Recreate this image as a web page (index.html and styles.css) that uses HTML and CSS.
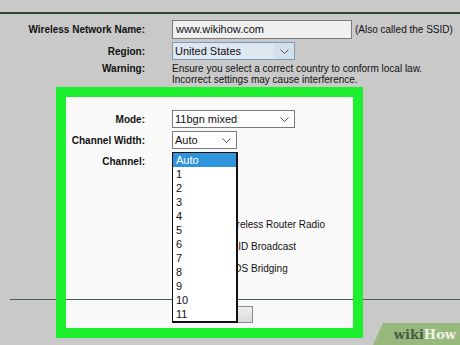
FILE: index.html
```html
<!DOCTYPE html>
<html>
<head>
<meta charset="utf-8">
<link rel="stylesheet" href="styles.css">
</head>
<body>
<div class="page">
  <hr class="topline">
  <div class="form-grid top-grid">
    <div class="lbl">Wireless Network Name:</div>
    <div class="ctl">
      <div class="textbox">www.wikihow.com</div>
      <span class="note">(Also called the SSID)</span>
    </div>
    <div class="lbl">Region:</div>
    <div class="ctl">
      <div class="select region"><span>United States</span><span class="arrow-box"><svg class="chev" width="9" height="5" viewBox="0 0 9 5"><polyline points="0.5,0.5 4.5,4.5 8.5,0.5" fill="none" stroke="#555" stroke-width="1"/></svg></span></div>
    </div>
    <div class="lbl lbl-top">Warning:</div>
    <div class="warn">Ensure you select a correct country to conform local law.<br>Incorrect settings may cause interference.</div>
  </div>

  <div class="panel">
    <div class="form-grid inner-grid">
      <div class="lbl">Mode:</div>
      <div class="ctl"><div class="select mode"><span>11bgn mixed</span><svg class="chev" width="9" height="5" viewBox="0 0 9 5"><polyline points="0.5,0.5 4.5,4.5 8.5,0.5" fill="none" stroke="#555" stroke-width="1"/></svg></div></div>
      <div class="lbl">Channel Width:</div>
      <div class="ctl"><div class="select width"><span>Auto</span><svg class="chev" width="9" height="5" viewBox="0 0 9 5"><polyline points="0.5,0.5 4.5,4.5 8.5,0.5" fill="none" stroke="#555" stroke-width="1"/></svg></div></div>
      <div class="lbl">Channel:</div>
      <div class="ctl"><div class="select width"><span>Auto</span></div></div>
    </div>
    <div class="checks">
      <div class="check-row"><span class="box"></span><span>Enable Wireless Router Radio</span></div>
      <div class="check-row"><span class="box"></span><span>Enable SSID Broadcast</span></div>
      <div class="check-row"><span class="box"></span><span>Enable WDS Bridging</span></div>
    </div>
    <div class="rule"></div>
    <div class="btn-row"><div class="btn">Save</div></div>

    <ul class="dropdown">
      <li class="sel">Auto</li>
      <li>1</li><li>2</li><li>3</li><li>4</li><li>5</li><li>6</li>
      <li>7</li><li>8</li><li>9</li><li>10</li><li>11</li>
    </ul>
  </div>

  <div class="badge"><span class="wiki">wiki</span><span class="how">How</span></div>
</div>
</body>
</html>
```

FILE: styles.css
```css
html, body {
  margin: 0;
  padding: 0;
}
body {
  background: #c9c9c9;
  font-family: "Liberation Sans", Arial, sans-serif;
  font-size: 10px;
  color: #111;
  width: 460px;
  height: 345px;
  overflow: hidden;
}
.page {
  position: relative;
  width: 460px;
  height: 345px;
  padding-top: 12px;
  box-sizing: border-box;
}
.topline {
  display: block;
  margin: 0;
  border: 0;
  height: 2px;
  background: #2f4836;
}
.form-grid {
  display: grid;
  column-gap: 27px;
  row-gap: 3px;
}
.top-grid {
  grid-template-columns: 145px 1fr;
  margin-top: 6px;
}
.lbl {
  font-weight: bold;
  text-align: right;
  align-self: center;
  white-space: nowrap;
}
.lbl-top {
  align-self: start;
  line-height: 11px;
}
.ctl {
  display: flex;
  align-items: center;
  gap: 3px;
}
.textbox {
  box-sizing: border-box;
  width: 180px;
  height: 19px;
  border: 1px solid #7b7b7b;
  background: #f0f0f0;
  font-size: 11px;
  line-height: 17px;
  padding-left: 3px;
}
.note {
  white-space: nowrap;
}
.select {
  box-sizing: border-box;
  height: 18px;
  border: 1px solid #7a7a7a;
  background: #fff;
  font-size: 11px;
  display: flex;
  align-items: center;
  justify-content: space-between;
  padding: 0 5px 0 2px;
}
.region {
  width: 123px;
  background: #dde7f0;
  border-color: #7b9ab8;
  padding-right: 0;
}
.arrow-box {
  width: 20px;
  height: 100%;
  display: flex;
  align-items: center;
  justify-content: center;
  background: #d3dfea;
}
.mode {
  width: 123px;
}
.width {
  width: 65px;
}
.warn {
  line-height: 11px;
  white-space: nowrap;
}
.panel {
  position: relative;
  box-sizing: border-box;
  margin: 2px 0 0 56px;
  width: 307px;
  height: 251px;
  background: #f9f9f9;
  padding: 23px 10px 10px 10px;
}
.panel::after {
  content: "";
  position: absolute;
  inset: 0;
  border: 10px solid #1ef02f;
  z-index: 3;
  pointer-events: none;
}
.inner-grid {
  grid-template-columns: 79px 1fr;
}
.checks {
  margin-top: 45px;
  margin-left: 106px;
  display: flex;
  flex-direction: column;
  gap: 4px;
}
.check-row {
  height: 18px;
  display: flex;
  align-items: center;
  gap: 6px;
  white-space: nowrap;
}
.box {
  width: 11px;
  height: 11px;
  border: 1px solid #555;
  background: #fff;
}
.rule {
  margin: 22px 0 0 -56px;
  width: 460px;
  height: 1px;
  background: #41614a;
  position: relative;
  z-index: 1;
}
.btn-row {
  margin: 6px 0 0 106px;
}
.btn {
  box-sizing: border-box;
  width: 81px;
  height: 17px;
  border: 1px solid #8a8a8a;
  background: linear-gradient(#efefef, #d9d9d9);
  font-size: 11px;
  line-height: 15px;
  text-align: center;
}
.dropdown {
  position: absolute;
  left: 116px;
  top: 65px;
  width: 66px;
  box-sizing: border-box;
  margin: 0;
  padding: 0;
  list-style: none;
  background: #fff;
  border: 1px solid #111;
  border-right-width: 2px;
  border-bottom-width: 2px;
  font-size: 11px;
  z-index: 2;
}
.dropdown li {
  height: 14px;
  line-height: 14px;
  padding-left: 3px;
}
.dropdown li.sel {
  background: #2e95dd;
  color: #fff;
}
.badge {
  position: absolute;
  right: 0;
  bottom: 0;
  width: 87px;
  height: 22px;
  background: #98b97d;
  clip-path: polygon(10px 0, 100% 0, 100% 100%, 0 100%);
  display: flex;
  align-items: center;
  justify-content: flex-end;
  padding-right: 4px;
  box-sizing: border-box;
  font-family: "DejaVu Serif", "Liberation Serif", serif;
  font-weight: bold;
  font-size: 13px;
  line-height: 22px;
  padding-top: 2px;
}
.wiki {
  color: #4a5a47;
}
.how {
  color: #eef4e6;
}
```
